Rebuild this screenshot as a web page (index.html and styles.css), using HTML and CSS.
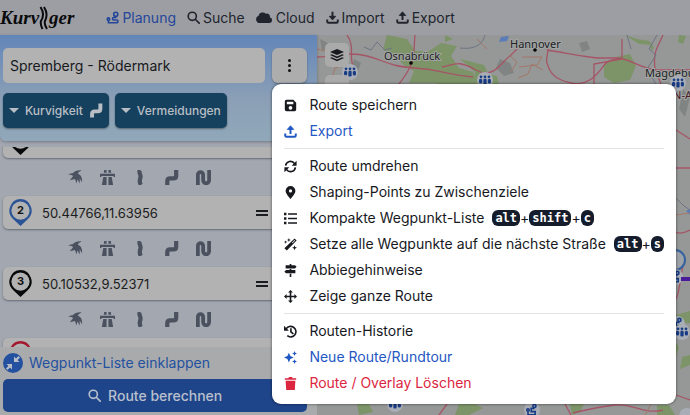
FILE: index.html
```html
<!DOCTYPE html>
<html lang="de">
<head>
<meta charset="utf-8">
<meta name="viewport" content="width=device-width, initial-scale=1">
<title>Kurviger</title>
<link rel="stylesheet" href="styles.css">
</head>
<body>
<svg class="sprite" aria-hidden="true">
  <symbol id="route" viewBox="0 0 16 16"><g fill="none" stroke="currentColor" stroke-width="2"><circle cx="12" cy="4" r="2.500"/><circle cx="3" cy="10" r="1.500"/><path d="M12 7v1H9.500a1.500 1.500 0 0 0 0 3H13a1.500 1.500 0 0 1 0 3.500H3V11"/></g></symbol>
  <symbol id="search" viewBox="0 0 16 16"><g fill="none" stroke="currentColor" stroke-width="2" stroke-linecap="round"><circle cx="6.500" cy="6.500" r="5"/><path d="M10.500 10.500 15 15"/></g></symbol>
  <symbol id="cloud" viewBox="0 0 20 16"><path fill="currentColor" d="M4.500 14A4.500 4.500 0 0 1 3 5.300 5 5 0 0 1 11.500 3a3.500 3.500 0 0 1 4.800 4A3.600 3.600 0 0 1 16 14z"/></symbol>
  <symbol id="import" viewBox="0 0 16 16"><g fill="none" stroke="currentColor" stroke-width="2.400" stroke-linejoin="round"><path d="M8 1v8M1.500 10.500V13a1.500 1.500 0 0 0 1.500 1.500h10a1.500 1.500 0 0 0 1.500-1.500v-2.500"/><path fill="currentColor" stroke-width="1" d="M4 6.500h8L8 11z"/></g></symbol>
  <symbol id="export" viewBox="0 0 16 16"><g fill="none" stroke="currentColor" stroke-width="2.400" stroke-linejoin="round"><path d="M8 11V4M1.500 10.500V13a1.500 1.500 0 0 0 1.500 1.500h10a1.500 1.500 0 0 0 1.500-1.500v-2.500"/><path fill="currentColor" stroke-width="1" d="M4 5.500h8L8 1z"/></g></symbol>
  <symbol id="save" viewBox="0 0 16 16"><path fill="currentColor" fill-rule="evenodd" d="M3 1h8.500L15 4.500V13a2 2 0 0 1-2 2H3a2 2 0 0 1-2-2V3a2 2 0 0 1 2-2zm.500 2.500v3h8v-3zM8 8.500a2.300 2.300 0 1 0 0 4.600 2.300 2.300 0 0 0 0-4.600z"/></symbol>
  <symbol id="swap" viewBox="0 0 16 16"><g fill="none" stroke="currentColor" stroke-width="2"><path d="M2 7a6 6 0 0 1 11-2.500M14 9a6 6 0 0 1-11 2.500"/></g><path fill="currentColor" d="M15.500 1v6h-6zM.500 15V9h6z"/></symbol>
  <symbol id="pin" viewBox="0 0 16 16"><path fill="currentColor" fill-rule="evenodd" d="M8 0a6 6 0 0 1 6 6c0 3-4 7.500-6 10C6 13.500 2 9 2 6a6 6 0 0 1 6-6zm0 4a2 2 0 1 0 0 4 2 2 0 0 0 0-4z"/></symbol>
  <symbol id="list" viewBox="0 0 16 16"><path fill="currentColor" d="M0 1h3v3H0zM0 6.500h3v3H0zM0 12h3v3H0zM5 1.500h11v2H5zM5 7h11v2H5zM5 12.500h11v2H5z"/></symbol>
  <symbol id="wand" viewBox="0 0 16 16"><path fill="currentColor" fill-rule="evenodd" d="M13 .500 15.500 3 3.500 15.500.500 12.500zm0 2L9.800 5.700l.700.700 3.200-3.200zM6 0l.700 1.800 1.800.700-1.800.700L6 5l-.700-1.800-1.800-.700 1.800-.700zM2 3l.600 1.400L4 5l-1.400.600L2 7l-.600-1.400L0 5l1.400-.600zM13 9l.800 2.200 2.200.800-2.200.800L13 15l-.800-2.200L10 12l2.200-.800z"/></symbol>
  <symbol id="signs" viewBox="0 0 16 16"><path fill="currentColor" d="M7 0h2v1.500h4.500l2 2-2 2H2v-4h5zM7 6h2v1.500h5v4H2.500l-2-2 2-2H7zM7 12h2v4H7z"/></symbol>
  <symbol id="move" viewBox="0 0 16 16"><path fill="currentColor" d="m8 0 3 3.200H9v3.800h3.800V5L16 8l-3.200 3V9H9v3.800h2L8 16l-3-3.200h2V9H3.200v2L0 8l3.200-3v2H7V3.200H5z"/></symbol>
  <symbol id="history" viewBox="0 0 16 16"><g fill="none" stroke="currentColor" stroke-width="2"><path d="M2.500 5A6.500 6.500 0 1 1 4 13.200M8.500 4v4.500l3 2.500"/></g><path fill="currentColor" d="M0 1v6h6z"/></symbol>
  <symbol id="sparkle" viewBox="0 0 16 16"><path fill="currentColor" d="m6 2 1.800 4.200L12 8 7.800 9.800 6 14l-1.800-4.200L0 8l4.200-1.800zM13 0l.900 2.100L16 3l-2.100.900L13 6l-.900-2.100L10 3l2.100-.900zM13 10l.900 2.100 2.100.900-2.100.900L13 16l-.900-2.100L10 13l2.100-.900z"/></symbol>
  <symbol id="trash" viewBox="0 0 16 16"><path fill="currentColor" d="M1 1.500h4.500l.500-1.500h4l.500 1.500H15v2H1zM2 4.500h12L13.300 16H2.700z"/></symbol>
  <symbol id="layers" viewBox="0 0 16 16"><path fill="currentColor" d="m8 1 8 3.500L8 8 0 4.500zM2 7l6 2.700L14 7l2 1-8 3.600L0 8zM2 10.500l6 2.700 6-2.700 2 1-8 3.600-8-3.600z"/></symbol>
  <symbol id="collapse" viewBox="0 0 20 20"><circle cx="10" cy="10" r="10" fill="#24519f"/><path fill="#b9bdc6" d="M11 3.500V9h5.500l-2-2L17 4.500 15.500 3 13 5.500zM9 16.500V11H3.500l2 2L3 15.500 4.500 17 7 14.500z"/></symbol>
  <symbol id="bird" viewBox="0 0 16 16"><path fill="currentColor" d="M0 5c2-1 3-2 5-1.500C7 1 11 0 14.500.500 12 1.500 11 2.500 10.500 4c3 1 5 4 4.500 9l-2.500-4v5.500L10 10l-1 4.500-1.500-5L2 11l3.500-4.500L3 5z"/></symbol>
  <symbol id="highway" viewBox="0 0 16 16"><path fill="currentColor" d="M4.500 0H7v3H4zM9 0h2.500l.500 3H9zM0 4h16v3.500h-1.500V6.500h-13v1H0zM3.500 7.500H7V16H2zM9 7.500h3.500L14 16H9z"/></symbol>
  <symbol id="curve1" viewBox="0 0 16 16"><path fill="none" stroke="currentColor" stroke-width="4.500" d="M8.500 0c-2 3 1.500 5 .500 8s-1.500 5 .500 8"/></symbol>
  <symbol id="curve2" viewBox="0 0 16 16"><path fill="none" stroke="currentColor" stroke-width="4.500" d="M3.500 16v-4q0-3 3-3h3.500q3 0 3-3V0"/></symbol>
  <symbol id="curve3" viewBox="0 0 16 16"><path fill="none" stroke="currentColor" stroke-width="4" d="M2 16V5a2.800 2.800 0 0 1 5.600 0v6a3.200 3.200 0 0 0 6.400 0V0"/></symbol>
  <symbol id="marker" viewBox="0 0 24 28"><path fill="currentColor" d="M12 0a12 12 0 0 1 7.500 21L12 28l-7.500-7A12 12 0 0 1 12 0z"/><circle cx="12" cy="12" r="9.500" fill="#b2b2b2"/></symbol>
  <symbol id="group" viewBox="0 0 20 20"><circle cx="10" cy="10" r="10" fill="#a9adb5"/><g fill="#173c85"><circle cx="5" cy="6" r="1.700"/><circle cx="10" cy="6" r="1.700"/><circle cx="15" cy="6" r="1.700"/><rect x="2.500" y="8.500" width="4" height="6" rx="2"/><rect x="8" y="8.500" width="4" height="7" rx="1.500"/><rect x="13.500" y="8.500" width="4" height="6" rx="2"/></g></symbol>
  <symbol id="tour" viewBox="0 0 20 20"><circle cx="10" cy="10" r="10" fill="#a9adb5"/><g fill="none" stroke="#173c85" stroke-width="2"><circle cx="13" cy="5" r="2"/><circle cx="5" cy="10" r="1.500"/><path d="M13 8H9v4h5v4H5v-4"/></g></symbol>
</svg>

<div class="app">
  <header class="topbar">
    <a class="logo" href="#" aria-label="Kurviger"><span>Kurv</span><svg class="logo-road" viewBox="0 0 10 24"><path d="M1.500 1c4 6 3 10 .500 14-1 3 0 5 1.500 8M5 1c4 6 3 10 1 14-1 3 0 5 2 8" fill="none" stroke="#090a0c" stroke-width="2"/></svg><span>ger</span></a>
    <nav class="nav">
      <a class="active" href="#"><svg><use href="#route"/></svg>Planung</a>
      <a href="#"><svg><use href="#search"/></svg>Suche</a>
      <a href="#"><svg class="wide"><use href="#cloud"/></svg>Cloud</a>
      <a href="#"><svg><use href="#import"/></svg>Import</a>
      <a href="#"><svg><use href="#export"/></svg>Export</a>
    </nav>
  </header>

  <div class="main">
    <aside class="panel">
      <div class="panel-head">
        <div class="title-row">
          <input class="title" type="text" aria-label="Routenname" value="Spremberg - Rödermark">
          <div class="more">
            <button class="kebab" type="button" aria-label="Weitere Optionen"><i></i><i></i><i></i></button>
            <div class="menu">
              <button type="button"><svg><use href="#save"/></svg>Route speichern</button>
              <button class="blue" type="button"><svg><use href="#export"/></svg>Export</button>
              <hr>
              <button type="button"><svg><use href="#swap"/></svg>Route umdrehen</button>
              <button type="button"><svg><use href="#pin"/></svg>Shaping-Points zu Zwischenziele</button>
              <button type="button"><svg><use href="#list"/></svg>Kompakte Wegpunkt-Liste<span class="keys"><kbd>alt</kbd>+<kbd>shift</kbd>+<kbd>c</kbd></span></button>
              <button type="button"><svg><use href="#wand"/></svg>Setze alle Wegpunkte auf die nächste Straße<span class="keys"><kbd>alt</kbd>+<kbd>s</kbd></span></button>
              <button type="button"><svg><use href="#signs"/></svg>Abbiegehinweise</button>
              <button type="button"><svg><use href="#move"/></svg>Zeige ganze Route</button>
              <hr>
              <button type="button"><svg><use href="#history"/></svg>Routen-Historie</button>
              <button class="blue" type="button"><svg><use href="#sparkle"/></svg>Neue Route/Rundtour</button>
              <button class="red" type="button"><svg><use href="#trash"/></svg>Route / Overlay Löschen</button>
            </div>
          </div>
        </div>
        <div class="filters">
          <button type="button"><span class="caret"></span>Kurvigkeit<svg><use href="#curve2"/></svg></button>
          <button type="button"><span class="caret"></span>Vermeidungen</button>
        </div>
      </div>

      <div class="scroll">
        <div class="waypoints">
          <div class="card black"><span class="num"><svg><use href="#marker"/></svg></span><span class="coord"></span><span class="grip"></span></div>
          <div class="modes"><svg><use href="#bird"/></svg><svg><use href="#highway"/></svg><svg><use href="#curve1"/></svg><svg><use href="#curve2"/></svg><svg><use href="#curve3"/></svg></div>
          <div class="card via"><span class="num"><svg><use href="#marker"/></svg><b>2</b></span><span class="coord">50.44766,11.63956</span><span class="grip"></span></div>
          <div class="modes"><svg><use href="#bird"/></svg><svg><use href="#highway"/></svg><svg><use href="#curve1"/></svg><svg><use href="#curve2"/></svg><svg><use href="#curve3"/></svg></div>
          <div class="card black"><span class="num"><svg><use href="#marker"/></svg><b>3</b></span><span class="coord">50.10532,9.52371</span><span class="grip"></span></div>
          <div class="modes"><svg><use href="#bird"/></svg><svg><use href="#highway"/></svg><svg><use href="#curve1"/></svg><svg><use href="#curve2"/></svg><svg><use href="#curve3"/></svg></div>
          <div class="card end"><span class="num"><svg><use href="#marker"/></svg></span><span class="coord"></span><span class="grip"></span></div>
        </div>
      </div>

      <div class="panel-foot">
        <a class="fold" href="#"><svg><use href="#collapse"/></svg>Wegpunkt-Liste einklappen</a>
        <button class="calc" type="button"><svg><use href="#search"/></svg>Route berechnen</button>
      </div>
    </aside>

    <div class="map">
      <svg class="tiles" viewBox="0 0 373 380" preserveAspectRatio="xMinYMin slice">
        <rect width="373" height="380" fill="#959896"/>
        <g fill="#7d9468">
          <path d="M70 0l20 4 8 12 14 0 12-8 16 3-6 10 8 12 14 4 6 12h-42l-14-8-18-10-12-12-10-4z"/>
          <path d="M98 34l16 4 8 10H92zM128 0l8 4-8 3zM143 24l24 6 4 8-12 0zM158 37l22 4 2 8h-24z"/>
          <path d="M287 30l12-8 14-3 6 12-6 14-16 3-10-6zM308 0l12 4 12 2 4 4-14-1zM362 0l7 1-3 8-5-2zM332 8l5 4-2 4z"/>
          <path d="M359 220l6 4-2 12-4 6zM359 280l14-4v12h-14zM359 308l3 4-3 10zM365 322l8-2v10l-10 4zM142 369l16 0 8 4-14 7h-14zM253 369h14l-4 8-8 3zM40 369h12l4 8-14 3zM340 370h12l6 10h-18z"/>
        </g>
        <g fill="#808584"><path d="M183 24l10 4 4 10-10 3-8-8zM37 24l7 4-3 8-6-3zM262 8l8-2 3 8-8 3zM3 4l10 5-8 8zM205 5l8 4-4 6zM366 54l7 8-5 20-6-8z"/></g>
        <path fill="#5a7cb8" d="M184 2l8-1-2 5-8 1zM369 176l4-2v6z"/>
        <g fill="none" stroke="#a65567" stroke-width="1.300">
          <path d="M30 0c8 10 2 24 6 30M0 22c20 0 30-6 50-1s20 10 48 12 28 6 58 9M98 0c-2 20 2 26-16 49M125 32c14-3 16-7 34 3s26-9 34-14l10-10"/>
          <path d="M230 8c3 10-2 14 0 20s4 16 24 20 30-14 34-19 10-4 17-5M230 15c20 3 26 5 50 8h23c16 4 20 10 36 12h34M305 4v20l-28 5v20M346 0c-6 14-10 16-8 34l6 15M359 95l14 9M359 133h14M359 197c4 3 10 0 14-2M366 230c-3 14-3 26-7 34M130 369l-8 11M248 369l6 11M256 378c16-4 24-6 42-8s28 10 48 5M359 360l14 5"/>
        </g>
        <g fill="none" stroke="#a4776a" stroke-width="1"><path d="M0 14l16 3 14-4M13 49l5-16 12-4M192 20l8 7-6 10M205 22h20l-5 8-18 2M201 43l10-4 4-10 11 6M160 4l10 10M359 180l14-2M334 369l-6 11"/></g>
        <g fill="none" stroke="#6d7484" stroke-width="1"><path d="M60 7l-6 8-7-3M60 7l8 8 7-2M143 13c18 2 23-6 25-13M340 0l-8 14 7 6-9 14 9 15M359 163l8 8 6 4M310 0l4 14"/></g>
        <text class="place" x="67" y="25">Osnabrück</text><circle cx="94" cy="28" r="1.800"/>
        <text class="place" x="193" y="13">Hannover</text><circle cx="218" cy="15" r="1.800"/>
        <text class="place" x="328" y="42">Magdeburg</text>
        <text class="place region" x="350" y="64">EN-ANHALT</text>
        <use href="#group" x="25" y="29" width="16" height="16"/><use href="#group" x="160" y="37" width="16" height="16"/><use href="#group" x="353" y="40" width="16" height="16"/>
        <circle cx="358" cy="225" r="10" fill="#9da1a8" stroke="#35619f" stroke-width="2"/>
        <use href="#tour" x="350" y="234" width="16" height="16"/><path d="M364 244h9" stroke="#4a1a9a" stroke-width="4"/>
        <use href="#tour" x="352" y="281" width="16" height="16"/><use href="#group" x="357" y="289" width="16" height="16"/>
        <use href="#group" x="70" y="361" width="16" height="16"/><use href="#tour" x="207" y="367" width="16" height="16"/><circle cx="370" cy="381" r="8" fill="#a9adb5"/>
      </svg>
      <div class="map-tools"><button type="button" aria-label="Kartenebenen"><svg><use href="#layers"/></svg></button><button type="button" aria-label="Vergrößern"></button></div>
    </div>
  </div>
</div>
</body>
</html>
```
FILE: styles.css
```css
* { box-sizing: border-box; }

body {
  margin: 0;
  font: 14px/20px Inter, sans-serif;
  color: #17191e;
}

button, input { font: inherit; color: inherit; border: 0; margin: 0; }
a { color: inherit; text-decoration: none; }
svg { flex: none; }
.sprite { position: absolute; width: 0; height: 0; }

.app {
  display: flex;
  flex-direction: column;
  height: 100vh;
  overflow: hidden;
}

/* top bar */
.topbar {
  display: flex;
  align-items: center;
  gap: 32px;
  flex: none;
  height: 35px;
  background: #9d9ea3;
}
.logo {
  display: flex;
  align-items: center;
  color: #090a0c;
  font: italic bold 19px/24px "Liberation Serif", serif;
}
.logo-road { width: 10px; height: 24px; }
.nav { display: flex; gap: 11px; color: #20242d; }
.nav a { display: flex; align-items: center; gap: 3px; }
.nav svg { width: 13px; height: 13px; }
.nav svg.wide { width: 17px; height: 14px; }
.nav .active { color: #24479a; }

/* layout */
.main { display: flex; flex: 1; min-height: 0; }
.panel {
  position: relative;
  z-index: 1;
  display: flex;
  flex-direction: column;
  flex: 0 0 46%;
  background: #a3a7b0;
}
.map { position: relative; flex: 1; min-width: 0; overflow: hidden; }

/* panel head */
.panel-head {
  position: relative;
  z-index: 2;
  display: flex;
  flex-direction: column;
  gap: 10px;
  padding: 13px 10px 13px 3px;
  border-radius: 0 0 6px 6px;
  background: linear-gradient(#6286b9, #8b9fb6 60%, #90a8b9);
  box-shadow: 0 1px 3px rgba(40, 50, 70, .4);
}
.title-row { display: flex; gap: 7px; }
.title {
  flex: 1;
  min-width: 0;
  height: 35px;
  padding: 0 7px;
  border-radius: 5px;
  background: #b2b2b2;
}
.more { position: relative; }
.kebab {
  display: flex;
  flex-direction: column;
  align-items: center;
  justify-content: center;
  gap: 2px;
  width: 35px;
  height: 35px;
  padding: 0;
  border-radius: 6px;
  background: #adadad;
  box-shadow: 0 1px 2px rgba(0, 0, 0, .3);
}
.kebab i { width: 3px; height: 3px; border-radius: 50%; background: #111; }

.filters { display: flex; gap: 6px; }
.filters button {
  display: flex;
  align-items: center;
  gap: 6px;
  height: 35px;
  padding: 0 6px;
  border-radius: 5px;
  background: #15415e;
  color: #b9bec5;
  font-size: 12px;
  font-weight: 500;
  box-shadow: 0 1px 2px rgba(0, 0, 0, .4);
}
.filters svg { width: 14px; height: 15px; }
.caret {
  border: 5px solid transparent;
  border-top-color: currentColor;
  border-bottom: 0;
}

/* waypoint list */
.scroll { flex: 1; min-height: 0; margin-top: 6px; overflow: hidden; }
.waypoints { margin-top: -22px; padding: 0 10px 0 3px; }
.card {
  display: flex;
  align-items: center;
  gap: 8px;
  height: 33px;
  padding: 0 10px 0 6px;
  border-radius: 5px;
  background: #b2b2b2;
  box-shadow: 0 1px 2px rgba(40, 45, 60, .5);
}
.num { display: grid; justify-items: center; width: 23px; height: 27px; }
.num > * { grid-area: 1 / 1; }
.num svg { width: 23px; height: 27px; }
.num b { font-size: 11px; line-height: 22px; color: #111; z-index: 1; }
.black { color: #08090b; }
.via .num { color: #2b5395; }
.end .num { color: #a4182f; }
.coord { flex: 1; padding-left: 2px; font-size: 13px; color: #1a1c20; }
.grip {
  width: 12px;
  height: 6px;
  margin-right: 29px;
  border: solid #1a1c20;
  border-width: 2px 0;
}
.modes {
  display: flex;
  align-items: center;
  gap: 17px;
  height: 38px;
  padding-left: 65px;
  color: #4c5160;
}
.modes svg { width: 15px; height: 15px; }

/* panel footer */
.panel-foot {
  display: flex;
  flex-direction: column;
  gap: 6px;
  padding: 6px 10px 3px 3px;
  background: #a9aaac;
}
.fold { display: flex; align-items: center; gap: 6px; color: #24519f; }
.fold svg { width: 20px; height: 20px; }
.calc {
  display: flex;
  align-items: center;
  justify-content: center;
  gap: 7px;
  height: 33px;
  border-radius: 5px;
  background: #1e448a;
  color: #b9c0cc;
  font-weight: 500;
}
.calc svg { width: 13px; height: 13px; }

/* dropdown menu */
.menu {
  position: absolute;
  top: 36px;
  left: 0;
  display: flex;
  flex-direction: column;
  width: max-content;
  padding: 8px 12px;
  border-radius: 9px;
  background: #fff;
  box-shadow: 0 0 3px rgba(0, 0, 0, .6);
}
.menu button {
  display: flex;
  align-items: center;
  gap: 12px;
  height: 26px;
  padding: 0;
  background: none;
  white-space: nowrap;
}
.menu svg { width: 13px; height: 13px; }
.menu hr {
  width: 100%;
  height: 1px;
  margin: 4px 0;
  border: 0;
  background: #e2e3e6;
}
.menu .blue { color: #1f57c3; }
.menu .red { color: #dc2640; }
.keys { display: flex; align-items: center; margin-left: -4px; }
kbd {
  padding: 0 3px;
  border-radius: 6px;
  background: #151d2d;
  color: #fff;
  font: bold 12px/16px "DejaVu Sans Mono", monospace;
}

/* map */
.tiles { display: block; width: 100%; height: 100%; }
.place {
  font: 11px "Noto Sans", sans-serif;
  fill: #202224;
  stroke: #a3a5a4;
  stroke-width: 2px;
  paint-order: stroke;
}
.region { fill: #4a1c28; }
.map-tools {
  position: absolute;
  top: 8px;
  left: 8px;
  display: flex;
  flex-direction: column;
  gap: 8px;
}
.map-tools button {
  display: grid;
  place-items: center;
  width: 24px;
  height: 24px;
  padding: 0;
  border-radius: 5px;
  background: #aaa;
}
.map-tools svg { width: 14px; height: 14px; }
```
